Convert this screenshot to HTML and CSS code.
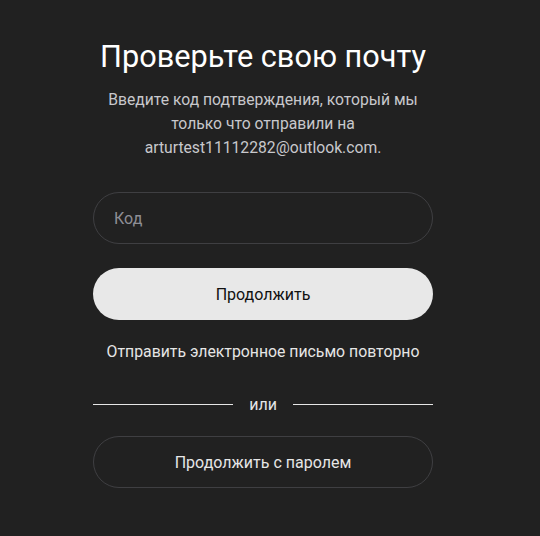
FILE: index.html
```html
<!DOCTYPE html>
<html lang="ru">
<head>
<meta charset="utf-8">
<link rel="stylesheet" href="styles.css">
</head>
<body>
<main class="card">
  <h1 class="title">Проверьте свою почту</h1>
  <p class="subtitle">Введите код подтверждения, который мы только что отправили на arturtest11112282@outlook.com.</p>
  <div class="field">
    <input class="input" type="text" placeholder="Код">
  </div>
  <button class="btn btn-primary">Продолжить</button>
  <button class="link">Отправить электронное письмо повторно</button>
  <div class="divider"><span class="line"></span><span class="or">или</span><span class="line"></span></div>
  <button class="btn btn-outline">Продолжить с паролем</button>
</main>
</body>
</html>
```
FILE: styles.css
```css
html, body {
  margin: 0;
  padding: 0;
  background: #212121;
  height: 100%;
}
body {
  font-family: Roboto, "Noto Sans", sans-serif;
  color: #fff;
}
.card {
  width: 340px;
  margin-left: 93px;
  padding-top: 37px;
  display: flex;
  flex-direction: column;
}
.title {
  margin: 0;
  font-size: 30.7px;
  line-height: 40px;
  font-weight: 400;
  text-align: center;
  white-space: nowrap;
}
.subtitle {
  margin: 11px 0 0;
  font-size: 15.7px;
  line-height: 24px;
  color: #c8c8cc;
  text-align: center;
  padding: 0 10px;
}
.field {
  margin-top: 32px;
}
.input {
  box-sizing: border-box;
  width: 100%;
  height: 52px;
  border: 1px solid #3f3f42;
  border-radius: 26px;
  background: transparent;
  padding: 0 20px;
  font-family: inherit;
  font-size: 16px;
  color: #fff;
  outline: none;
}
.input::placeholder { color: #8e8e95; }
.btn {
  box-sizing: border-box;
  width: 100%;
  height: 52px;
  border-radius: 26px;
  font-family: inherit;
  font-size: 16px;
  cursor: pointer;
}
.btn-primary {
  margin-top: 24px;
  background: #e8e8e8;
  color: #111;
  border: none;
}
.link {
  margin-top: 20px;
  background: none;
  border: none;
  color: #e6e6e6;
  font-family: inherit;
  font-size: 15.8px;
  line-height: 24px;
  padding: 0;
}
.divider {
  margin-top: 28px;
  display: flex;
  align-items: center;
  gap: 16px;
  height: 24px;
}
.line {
  flex: 1;
  height: 1px;
  background: #e6e6e6;
}
.or {
  color: #e6e6e6;
  font-size: 16px;
  width: 28px;
  text-align: center;
}
.btn-outline {
  margin-top: 20px;
  background: transparent;
  border: 1px solid #3f3f42;
  color: #e6e6e6;
}
```
